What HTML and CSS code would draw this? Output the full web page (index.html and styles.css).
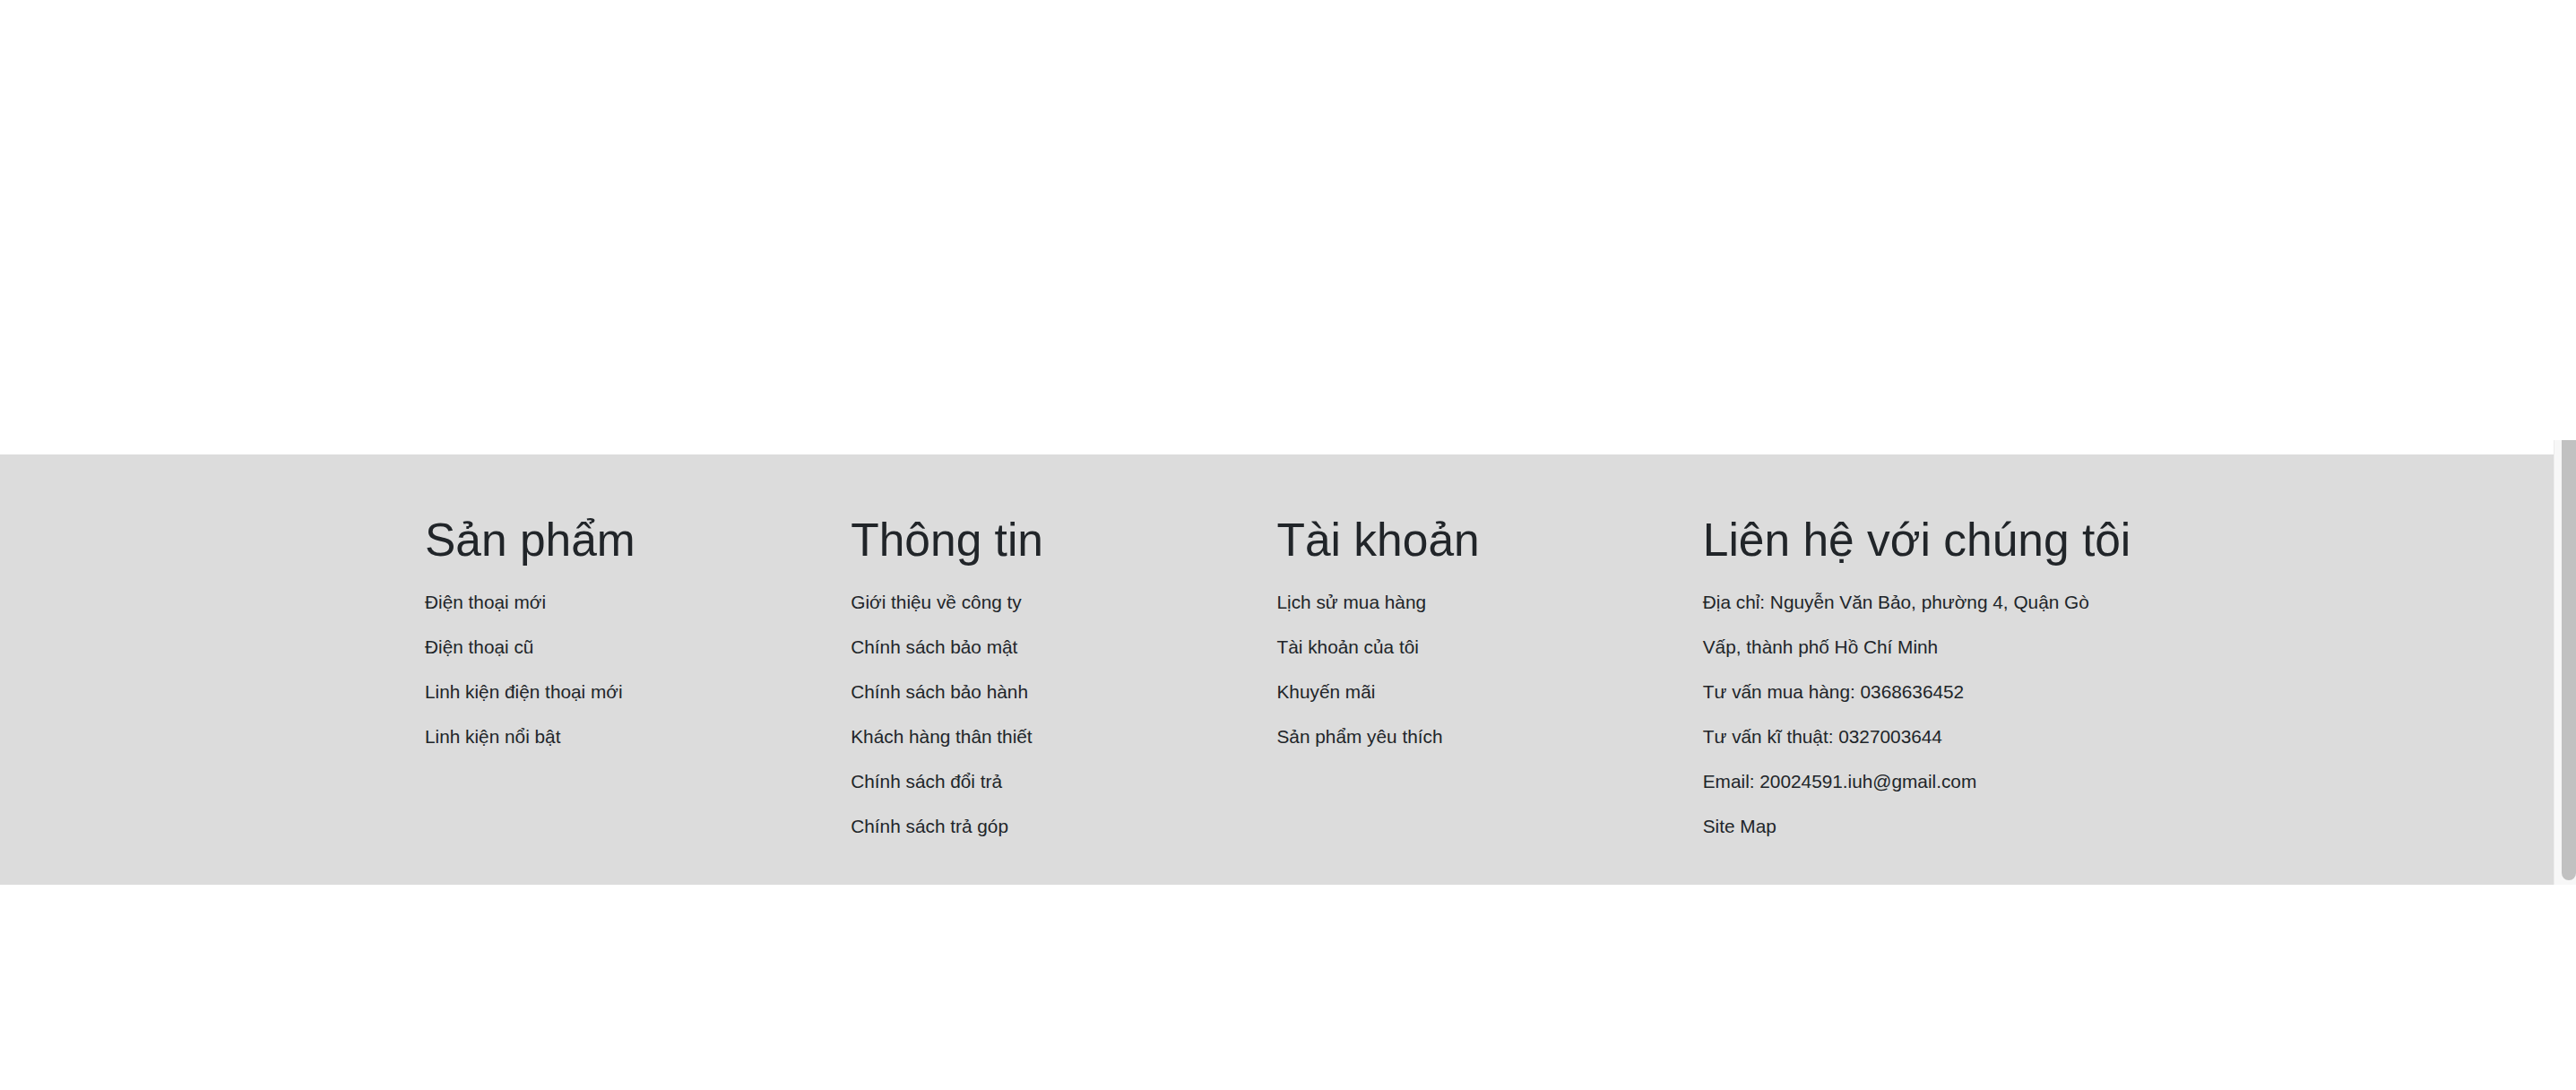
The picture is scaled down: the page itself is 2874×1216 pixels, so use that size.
FILE: index.html
```html
<!DOCTYPE html>
<html lang="vi">
<head>
<meta charset="utf-8">
<title>Footer</title>
<link rel="stylesheet" href="styles.css">
</head>
<body>
<div class="page">
  <main class="content"></main>
  <footer class="footer">
    <div class="container">
      <div class="col">
        <h2 class="title">Sản phẩm</h2>
        <ul class="links">
          <li>Điện thoại mới</li>
          <li>Điện thoại cũ</li>
          <li>Linh kiện điện thoại mới</li>
          <li>Linh kiện nổi bật</li>
        </ul>
      </div>
      <div class="col">
        <h2 class="title">Thông tin</h2>
        <ul class="links">
          <li>Giới thiệu về công ty</li>
          <li>Chính sách bảo mật</li>
          <li>Chính sách bảo hành</li>
          <li>Khách hàng thân thiết</li>
          <li>Chính sách đổi trả</li>
          <li>Chính sách trả góp</li>
        </ul>
      </div>
      <div class="col">
        <h2 class="title">Tài khoản</h2>
        <ul class="links">
          <li>Lịch sử mua hàng</li>
          <li>Tài khoản của tôi</li>
          <li>Khuyến mãi</li>
          <li>Sản phẩm yêu thích</li>
        </ul>
      </div>
      <div class="col">
        <h2 class="title">Liên hệ với chúng tôi</h2>
        <ul class="links">
          <li>Địa chỉ: Nguyễn Văn Bảo, phường 4, Quận Gò</li>
          <li>Vấp, thành phố Hồ Chí Minh</li>
          <li>Tư vấn mua hàng: 0368636452</li>
          <li>Tư vấn kĩ thuật: 0327003644</li>
          <li>Email: 20024591.iuh@gmail.com</li>
          <li>Site Map</li>
        </ul>
      </div>
    </div>
  </footer>
</div>
<div class="scrollbar"><div class="thumb"></div></div>
</body>
</html>
```

FILE: styles.css
```css
html, body {
  margin: 0;
  padding: 0;
  background: #ffffff;
}
body {
  font-family: "Liberation Sans", Arial, sans-serif;
  color: #212529;
  width: 2874px;
  height: 1216px;
  overflow: hidden;
  position: relative;
}
.page {
  width: 2849px;
}
.content {
  height: 507px;
}
.footer {
  background: #dcdcdc;
  height: 480px;
  box-sizing: border-box;
  padding-top: 65px;
}
.container {
  width: 1901px;
  margin: 0 auto;
  display: grid;
  grid-template-columns: repeat(4, minmax(0, 1fr));
}
.col {
  min-width: 0;
}
.title {
  margin: 0 0 23px 0;
  font-size: 51.5px;
  font-weight: 400;
  line-height: 1.2;
  white-space: nowrap;
}
.links {
  list-style: none;
  margin: 0;
  padding: 0;
  display: flex;
  flex-direction: column;
  gap: 20px;
}
.links li {
  font-size: 20.8px;
  line-height: 30px;
  white-space: nowrap;
}
.scrollbar {
  position: absolute;
  left: 2849px;
  top: 491px;
  width: 25px;
  height: 496px;
  background: #f7f7f7;
  border-left: 1px solid #ececec;
  box-sizing: border-box;
  overflow: hidden;
}
.thumb {
  position: absolute;
  left: 8px;
  right: 0;
  top: -10px;
  bottom: 5px;
  background: #c1c1c1;
  border-radius: 8px;
}
```
